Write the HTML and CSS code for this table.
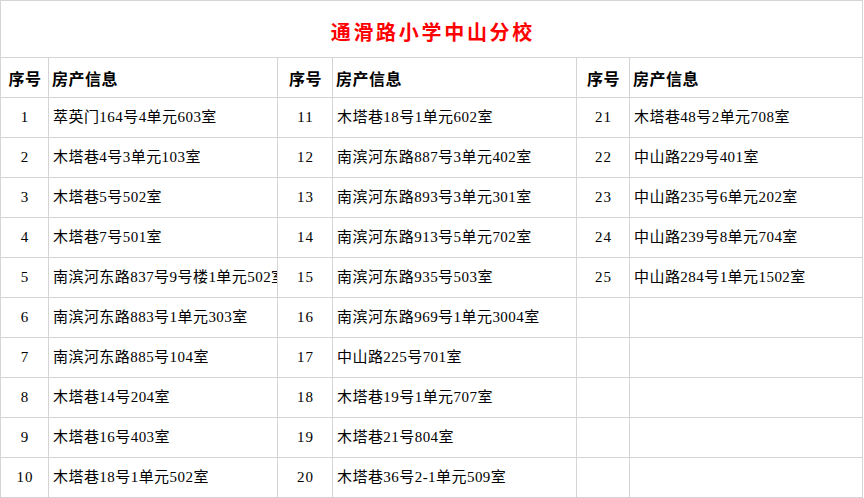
FILE: index.html
```html
<!DOCTYPE html>
<html lang="zh-CN">
<head>
<meta charset="utf-8">
<title>通滑路小学中山分校</title>
<link rel="stylesheet" href="styles.css">
</head>
<body>
<div class="sheet">
  <div class="title">通滑路小学中山分校</div>

  <div class="hd num">序号</div><div class="hd info">房产信息</div>
  <div class="hd num">序号</div><div class="hd info">房产信息</div>
  <div class="hd num">序号</div><div class="hd info">房产信息</div>

  <div class="num">1</div><div class="info">萃英门164号4单元603室</div>
  <div class="num">11</div><div class="info">木塔巷18号1单元602室</div>
  <div class="num">21</div><div class="info">木塔巷48号2单元708室</div>

  <div class="num">2</div><div class="info">木塔巷4号3单元103室</div>
  <div class="num">12</div><div class="info">南滨河东路887号3单元402室</div>
  <div class="num">22</div><div class="info">中山路229号401室</div>

  <div class="num">3</div><div class="info">木塔巷5号502室</div>
  <div class="num">13</div><div class="info">南滨河东路893号3单元301室</div>
  <div class="num">23</div><div class="info">中山路235号6单元202室</div>

  <div class="num">4</div><div class="info">木塔巷7号501室</div>
  <div class="num">14</div><div class="info">南滨河东路913号5单元702室</div>
  <div class="num">24</div><div class="info">中山路239号8单元704室</div>

  <div class="num">5</div><div class="info">南滨河东路837号9号楼1单元502室</div>
  <div class="num">15</div><div class="info">南滨河东路935号503室</div>
  <div class="num">25</div><div class="info">中山路284号1单元1502室</div>

  <div class="num">6</div><div class="info">南滨河东路883号1单元303室</div>
  <div class="num">16</div><div class="info">南滨河东路969号1单元3004室</div>
  <div class="num"></div><div class="info"></div>

  <div class="num">7</div><div class="info">南滨河东路885号104室</div>
  <div class="num">17</div><div class="info">中山路225号701室</div>
  <div class="num"></div><div class="info"></div>

  <div class="num">8</div><div class="info">木塔巷14号204室</div>
  <div class="num">18</div><div class="info">木塔巷19号1单元707室</div>
  <div class="num"></div><div class="info"></div>

  <div class="num">9</div><div class="info">木塔巷16号403室</div>
  <div class="num">19</div><div class="info">木塔巷21号804室</div>
  <div class="num"></div><div class="info"></div>

  <div class="num">10</div><div class="info">木塔巷18号1单元502室</div>
  <div class="num">20</div><div class="info">木塔巷36号2-1单元509室</div>
  <div class="num"></div><div class="info"></div>
</div>
</body>
</html>
```

FILE: styles.css
```css
html, body {
  margin: 0;
  padding: 0;
  background: #ffffff;
}

body {
  font-family: "Liberation Serif", "Noto Sans CJK SC", serif;
  color: #000000;
}

.sheet {
  width: 863px;
  display: grid;
  grid-template-columns: 47px 228px 54px 243px 52px 232px;
  grid-template-rows: 56px 39px repeat(10, 39px);
  gap: 1px;
  padding: 1px;
  box-sizing: border-box;
  height: 498px;
  background: #d4d4d4;
}

.sheet > div {
  background: #ffffff;
  display: flex;
  align-items: center;
  overflow: hidden;
  white-space: nowrap;
  font-size: 15px;
  line-height: 1;
}

.sheet > .title {
  grid-column: 1 / -1;
  justify-content: center;
  color: #ff0000;
  font-family: "Noto Sans CJK SC", sans-serif;
  font-weight: 700;
  font-size: 20px;
  letter-spacing: 2.7px;
  padding-left: 2.7px;
  padding-top: 5px;
  box-sizing: border-box;
}

.sheet > .num {
  justify-content: center;
  letter-spacing: 1px;
  padding-left: 1px;
}

.sheet > .info {
  padding-left: 4px;
  letter-spacing: 0.45px;
}

.sheet > .hd {
  font-family: "Noto Sans CJK SC", sans-serif;
  font-weight: 700;
  font-size: 16px;
  letter-spacing: 0.5px;
}

.sheet > .hd.info {
  padding-left: 3px;
}
```
